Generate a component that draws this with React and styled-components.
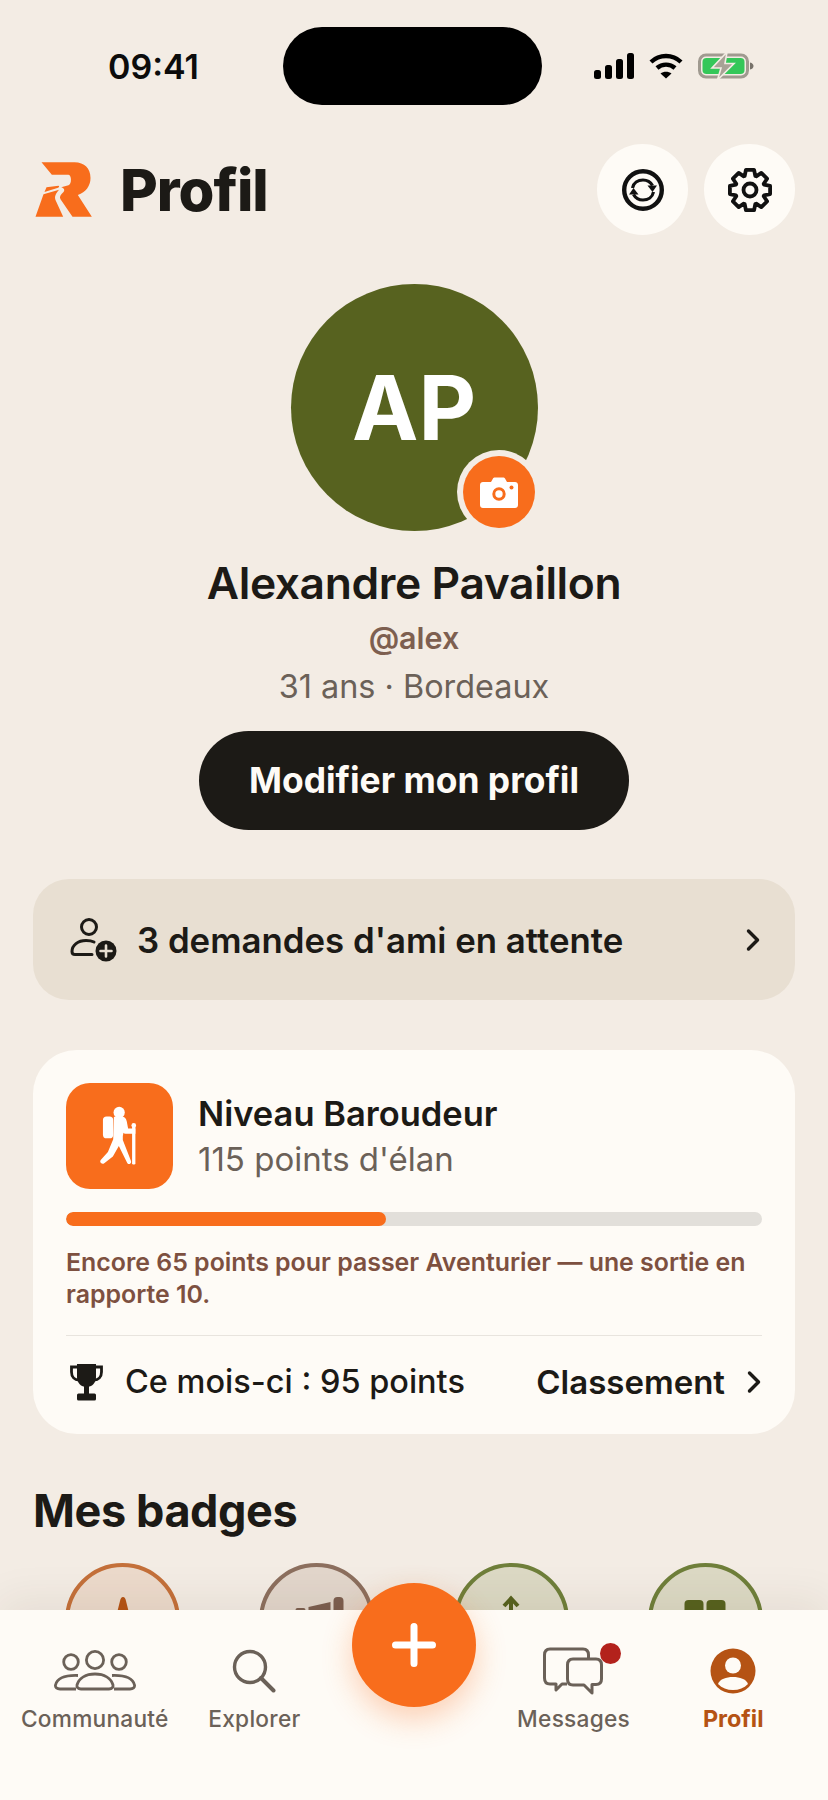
import React from "react";
import styled, { createGlobalStyle } from "styled-components";
import { ChevronRight } from "lucide-react";

const GlobalStyle = createGlobalStyle`
  html, body {
    margin: 0;
    padding: 0;
    background: #f3ece4;
  }
  * { box-sizing: border-box; }
`;

const Page = styled.div`
  position: relative;
  width: 828px;
  height: 1800px;
  overflow: hidden;
  background: #f3ece4;
  color: #1c1a16;
  font-family: Inter, "Liberation Sans", sans-serif;
`;

const StatusBar = styled.div`
  display: grid;
  grid-template-columns: 283px 259px 1fr;
  align-items: center;
  height: 78px;
  margin-top: 27px;
`;

const Time = styled.div`
  padding-left: 24px;
  text-align: center;
  font-size: 34px;
  font-weight: 600;
  color: #0c0c0c;
`;

const Island = styled.div`
  height: 78px;
  border-radius: 39px;
  background: #000;
`;

const StatusIcons = styled.div`
  display: flex;
  align-items: center;
  gap: 15px;
  padding-left: 52px;
`;

const Header = styled.header`
  display: flex;
  align-items: center;
  height: 91px;
  margin-top: 39px;
  padding: 0 33px 0 35px;
`;

const PageTitle = styled.h1`
  flex: 1;
  margin: 0 0 0 28px;
  font-size: 58px;
  font-weight: 800;
  letter-spacing: -1px;
`;

const HeaderActions = styled.div`
  display: flex;
  gap: 16px;
`;

const RoundButton = styled.div`
  display: flex;
  align-items: center;
  justify-content: center;
  width: 91px;
  height: 91px;
  border-radius: 50%;
  background: #fefbf6;
`;

const Identity = styled.section`
  display: flex;
  flex-direction: column;
  align-items: center;
  margin-top: 49px;
`;

const Avatar = styled.div`
  position: relative;
  display: flex;
  align-items: center;
  justify-content: center;
  width: 247px;
  height: 247px;
  border-radius: 50%;
  background: #57621f;
  color: #fff;
  font-size: 89px;
  font-weight: 700;
`;

const CameraBadge = styled.div`
  position: absolute;
  right: 3px;
  bottom: 3px;
  display: flex;
  align-items: center;
  justify-content: center;
  width: 72px;
  height: 72px;
  border-radius: 50%;
  background: #f86d1c;
  box-shadow: 0 0 0 6px #f3ece4;
`;

const Name = styled.h2`
  margin: 26px 0 0;
  font-size: 44.4px;
  line-height: 52px;
  font-weight: 600;
  letter-spacing: -0.4px;
`;

const Handle = styled.div`
  margin-top: 9px;
  font-size: 30.5px;
  line-height: 40px;
  font-weight: 600;
  color: #7d5f50;
`;

const Meta = styled.div`
  margin-top: 9px;
  font-size: 32.4px;
  line-height: 40px;
  color: #6b6158;
`;

const EditButton = styled.div`
  display: flex;
  align-items: center;
  justify-content: center;
  width: 430px;
  height: 99px;
  margin-top: 24px;
  border-radius: 50px;
  background: #1c1a16;
  color: #fefbf6;
  font-size: 35.4px;
  font-weight: 700;
`;

const FriendRequests = styled.div`
  display: flex;
  align-items: center;
  height: 121px;
  margin: 49px 33px 0;
  padding: 0 24px 0 37px;
  border-radius: 36px;
  background: #e8dfd2;
  font-size: 34.8px;
  font-weight: 600;
`;

const FriendLabel = styled.span`
  flex: 1;
  margin-left: 20px;
`;

const LevelCard = styled.section`
  height: 384px;
  margin: 50px 33px 0;
  padding: 33px;
  border-radius: 44px;
  background: #fefbf6;
`;

const LevelHead = styled.div`
  display: flex;
  align-items: center;
  gap: 25px;
`;

const LevelIcon = styled.div`
  display: flex;
  width: 107px;
  height: 106px;
  border-radius: 24px;
  background: #f86d1c;
`;

const LevelTitle = styled.div`
  font-size: 34.5px;
  line-height: 44px;
  font-weight: 600;
`;

const LevelPoints = styled.div`
  margin-top: 1px;
  font-size: 33px;
  line-height: 44px;
  color: #6b6158;
`;

const Progress = styled.div`
  height: 14px;
  margin-top: 23px;
  border-radius: 7px;
  background: #e2dfda;
  overflow: hidden;
`;

const ProgressFill = styled.div`
  height: 100%;
  border-radius: 7px;
  background: #f86d1c;
`;

const LevelHint = styled.p`
  margin: 20px 0 0;
  font-size: 24.9px;
  line-height: 32px;
  font-weight: 600;
  color: #7d5040;
`;

const LevelFooter = styled.div`
  display: flex;
  align-items: center;
  height: 92px;
  margin-top: 25px;
  padding-left: 4px;
  border-top: 1px solid #e8e4de;
  font-size: 33px;
`;

const MonthPoints = styled.span`
  flex: 1;
  margin-left: 22px;
  font-size: 32.5px;
  font-weight: 500;
`;

const RankLink = styled.span`
  margin-right: 11px;
  font-weight: 600;
`;

const FooterChevron = styled(ChevronRight)`
  margin-right: -10px;
`;

const SectionTitle = styled.h3`
  margin: 51px 33px 0;
  font-size: 45px;
  line-height: 52px;
  font-weight: 700;
  letter-spacing: -0.4px;
`;

const BadgeRow = styled.div`
  display: flex;
  justify-content: space-between;
  margin-top: 26px;
  padding: 0 65px;
`;

const BadgeCircle = styled.div`
  display: flex;
  justify-content: center;
  width: 115px;
  height: 115px;
  padding-top: 30px;
  border-radius: 50%;
  border: 4px solid ${(p) => p.$ring};
  background: ${(p) => p.$fill};
`;

const TabBar = styled.nav`
  position: absolute;
  left: 0;
  right: 0;
  bottom: 0;
  display: grid;
  grid-template-columns: repeat(5, 1fr);
  height: 190px;
  padding: 0 15px;
  background: #fefbf6;
  box-shadow: 0 -10px 40px rgba(60, 40, 20, 0.07);
`;

const Tab = styled.div`
  position: relative;
  display: flex;
  flex-direction: column;
  align-items: center;
  padding-top: 38px;
  font-size: ${(p) => (p.$active ? "23.4px" : "22.7px")};
  font-weight: ${(p) => (p.$active ? 700 : 450)};
  letter-spacing: ${(p) => (p.$active ? "0" : "0.25px")};
  color: ${(p) => (p.$active ? "#b55314" : "#6b6158")};
`;

const TabIcon = styled.div`
  display: flex;
  align-items: center;
  justify-content: center;
  height: 46px;
`;

const TabLabel = styled.span`
  margin-top: 10px;
  line-height: 30px;
`;

const MessageDot = styled.div`
  position: absolute;
  top: 33px;
  right: 32px;
  width: 21px;
  height: 21px;
  border-radius: 50%;
  background: #b3221c;
`;

const Fab = styled.div`
  position: absolute;
  left: 352px;
  bottom: 93px;
  display: flex;
  align-items: center;
  justify-content: center;
  width: 124px;
  height: 124px;
  border-radius: 50%;
  background: #f86d1c;
  box-shadow: 0 12px 30px rgba(248, 109, 28, 0.3);
`;

function Signal() {
  return (
    <svg width="40" height="26" viewBox="0 0 40 26" fill="#000">
      <rect x="0" y="17" width="7" height="9" rx="2.5" />
      <rect x="11" y="12" width="7" height="14" rx="2.5" />
      <rect x="22" y="6" width="7" height="20" rx="2.5" />
      <rect x="33" y="0" width="7" height="26" rx="2.5" />
    </svg>
  );
}

function Wifi() {
  return (
    <svg width="34" height="26" viewBox="0 0 34 26" fill="none" stroke="#000" strokeWidth="4.4">
      <path d="M2 9C10.5 1 23.5 1 32 9" />
      <path d="M8 15C13 10.5 21 10.5 26 15" />
      <path d="M17 25.5L11.5 20.5C14.5 18 19.5 18 22.5 20.5Z" fill="#000" stroke="none" />
    </svg>
  );
}

function Battery() {
  return (
    <svg width="56" height="28" viewBox="0 0 56 28">
      <rect x="1.5" y="3" width="48" height="22" rx="6.5" fill="none" stroke="#a09a90" strokeWidth="3" />
      <rect x="4.5" y="6" width="42" height="16" rx="4" fill="#34c759" />
      <path d="M52 10.5C54.5 11 55.5 12.5 55.5 14C55.5 15.5 54.5 17 52 17.5Z" fill="#77726a" />
      <path d="M29 0L14 16H23L19.5 28L36 11.5H27Z" fill="#a8a296" stroke="#f3ece4" strokeWidth="1.6" />
    </svg>
  );
}

function Logo() {
  return (
    <svg width="57" height="55" viewBox="0 0 170 165" fill="#f86d1c">
      <path d="M19 1H118C148 1 166 20 166 48C166 72 152 90 128 99L170 164H112L76 112C72 105 76 98 85 90C90 84 86 78 78 76L100 70C110 66 110 40 100 38H50Z" />
      <path d="M34 76L70 71C74 73 72 76 64 79L28 90ZM25 97L72 83C62 94 56 104 62 116L84 164H1Z" />
    </svg>
  );
}

function RefreshIcon() {
  return (
    <svg width="42" height="42" viewBox="0 0 42 42" fill="none" stroke="#111">
      <circle cx="21" cy="21" r="18.8" strokeWidth="4.4" />
      <path d="M10.5 19C11.5 14 16 11 21 11C25 11 28.5 13 30.5 16.5" strokeWidth="3.2" />
      <path d="M31.5 23C30.5 28 26 31 21 31C17 31 13.5 29 11.5 25.5" strokeWidth="3.2" />
      <path d="M25.5 16.5H35L30.5 23Z" fill="#111" stroke="none" />
      <path d="M16.5 25.5H7L11.5 19Z" fill="#111" stroke="none" />
    </svg>
  );
}

// 8 teeth, one pointing straight up
function gearPath(cx, cy, outer, inner) {
  const parts = [];
  for (let i = 0; i < 8; i++) {
    const mid = (i * Math.PI) / 4 - Math.PI / 2;
    const pts = [
      [inner, mid - 0.36],
      [outer, mid - 0.2],
      [outer, mid + 0.2],
      [inner, mid + 0.36],
    ];
    pts.forEach(([r, a]) => {
      const x = (cx + r * Math.cos(a)).toFixed(1);
      const y = (cy + r * Math.sin(a)).toFixed(1);
      parts.push(`${parts.length === 0 ? "M" : "L"}${x} ${y}`);
    });
  }
  return parts.join("") + "Z";
}

function GearIcon() {
  return (
    <svg width="46" height="46" viewBox="0 0 46 46" fill="none" stroke="#111" strokeWidth="3.8" strokeLinejoin="round">
      <path d={gearPath(23, 23, 20.5, 15)} />
      <circle cx="23" cy="23" r="6.5" />
    </svg>
  );
}

function CameraIcon() {
  return (
    <svg width="38" height="31" viewBox="0 0 38 31">
      <path d="M3 5H11L13 1.5C13.5 .7 14 .5 15 .5H23C24 .5 24.5 .7 25 1.5L27 5H35C36.7 5 38 6.3 38 8V28C38 29.7 36.7 31 35 31H3C1.3 31 0 29.7 0 28V8C0 6.3 1.3 5 3 5Z" fill="#fff" />
      <circle cx="19" cy="17" r="5.2" fill="none" stroke="#f86d1c" strokeWidth="3" />
      <circle cx="31.5" cy="10.5" r="2" fill="#f86d1c" />
    </svg>
  );
}

function FriendIcon() {
  return (
    <svg width="47" height="44" viewBox="0 0 47 44" fill="none" stroke="#1c1a16" strokeWidth="3" strokeLinecap="round">
      <circle cx="19" cy="9" r="7.5" />
      <path d="M24 24C21 22.5 18 22.5 16 22.5C8 22.5 2 27 2 33.5C2 35.5 3 36.5 5 36.5H22" />
      <circle cx="36" cy="33" r="10.5" fill="#1c1a16" stroke="none" />
      <path d="M36 27.5V38.5M30.5 33H41.5" stroke="#e8dfd2" strokeWidth="2.6" />
    </svg>
  );
}

function HikerIcon() {
  return (
    <svg width="107" height="106" viewBox="0 0 320 320" fill="#fff">
      <circle cx="159" cy="89" r="17" />
      <rect x="110" y="101" width="31" height="66" rx="11" />
      <path d="M143 102H168C176 102 180 108 182 116L186 137H208V153H178C175 153 173 152 172 150L170 160V172L195 236C197 244 186 248 183 241L158 190L140 222L113 243C106 247 98 238 104 232L125 208L141 170Z" />
      <rect x="198" y="124" width="10" height="122" rx="4" />
      <circle cx="203" cy="128" r="7" />
    </svg>
  );
}

function TrophyIcon() {
  return (
    <svg width="33" height="38" viewBox="0 0 33 38" fill="#1c1a16">
      <path d="M7 1H26V14C26 20 22 24 16.5 24C11 24 7 20 7 14Z" />
      <path d="M7 4H1.5V9C1.5 14 4.5 17 9 17M26 4H31.5V9C31.5 14 28.5 17 24 17" fill="none" stroke="#1c1a16" strokeWidth="2.8" />
      <rect x="14" y="23" width="5" height="8" />
      <rect x="7" y="30.5" width="19" height="7" rx="1.5" />
    </svg>
  );
}

function CommunityIcon() {
  return (
    <svg width="82" height="42" viewBox="0 0 82 42" fill="none" stroke="#6b6158" strokeWidth="2.8">
      <circle cx="17" cy="12" r="7.3" />
      <circle cx="41" cy="10" r="8.6" />
      <circle cx="65" cy="12" r="7.3" />
      <path d="M27 39H55C58 39 59.5 37 59 35C57 28 50 24 41 24C32 24 25 28 23 35C22.5 37 24 39 27 39Z" />
      <path d="M22 39H6C3 39 1 37.5 1.5 35C3 29 10 25 24 25.5" />
      <path d="M60 39H76C79 39 81 37.5 80.5 35C79 29 72 25 58 25.5" />
    </svg>
  );
}

function SearchIcon() {
  return (
    <svg width="44" height="44" viewBox="0 0 44 44" fill="none" stroke="#6b6158" strokeWidth="3.4" strokeLinecap="round">
      <circle cx="18" cy="18" r="15.5" />
      <path d="M29 29L41.5 41.5" strokeWidth="4" />
    </svg>
  );
}

function MessagesIcon() {
  return (
    <svg width="62" height="48" viewBox="0 0 62 48" fill="none" stroke="#6b6158" strokeWidth="3" strokeLinejoin="round">
      <path d="M24 37H19L13 43V37H7C3.5 37 1.5 35 1.5 31V8C1.5 4 3.5 2 7 2H40C43.5 2 45.5 4 45.5 8V12" />
      <path d="M30 12H53C56.5 12 58.5 14 58.5 18V32C58.5 35.5 56.5 37.5 53 37.5H49V46L41 38H30C26.5 38 24.5 36 24.5 32V18C24.5 14 26.5 12 30 12Z" />
    </svg>
  );
}

function ProfileIcon() {
  return (
    <svg width="46" height="46" viewBox="0 0 46 46">
      <circle cx="23" cy="23" r="22.5" fill="#b55314" />
      <circle cx="23" cy="17.5" r="8" fill="#fefbf6" />
      <path d="M8 36C10 31 16 29 23 29C30 29 36 31 38 36C34 40 29 42 23 42C17 42 12 40 8 36Z" fill="#fefbf6" />
    </svg>
  );
}

function PlusIcon() {
  return (
    <svg width="44" height="44" viewBox="0 0 44 44" stroke="#fff" strokeWidth="7" strokeLinecap="round">
      <path d="M22 3.5V40.5M3.5 22H40.5" />
    </svg>
  );
}

const badges = [
  {
    ring: "#c4703a",
    fill: "#ecdacb",
    icon: <path d="M24 0C25.5 0 26.5 1.5 27 4L31 20H17L21 4C21.5 1.5 22.5 0 24 0Z" fill="#b55314" />,
  },
  {
    ring: "#8c6f5e",
    fill: "#e2d6cb",
    icon: (
      <g fill="#7d5f50">
        <rect x="2.5" y="11" width="10" height="12" rx="2" />
        <path d="M15.5 10L37.5 5V23H15.5Z" />
        <rect x="40.5" y="0" width="10" height="23" rx="4" />
      </g>
    ),
  },
  {
    ring: "#6f7f3a",
    fill: "#dcd9c4",
    icon: <path d="M17 9L24 1.5L31 9M24 1.5V24" fill="none" stroke="#57621f" strokeWidth="4" />,
  },
  {
    ring: "#6f7f3a",
    fill: "#dcd9c4",
    icon: (
      <g fill="#57621f">
        <rect x="3.5" y="3" width="19" height="21" rx="4" />
        <rect x="25.5" y="3" width="19" height="21" rx="4" />
      </g>
    ),
  },
];

export default function App() {
  return (
    <Page>
      <GlobalStyle />
      <StatusBar>
        <Time>09:41</Time>
        <Island />
        <StatusIcons>
          <Signal />
          <Wifi />
          <Battery />
        </StatusIcons>
      </StatusBar>

      <Header>
        <Logo />
        <PageTitle>Profil</PageTitle>
        <HeaderActions>
          <RoundButton><RefreshIcon /></RoundButton>
          <RoundButton><GearIcon /></RoundButton>
        </HeaderActions>
      </Header>

      <Identity>
        <Avatar>
          AP
          <CameraBadge><CameraIcon /></CameraBadge>
        </Avatar>
        <Name>Alexandre Pavaillon</Name>
        <Handle>@alex</Handle>
        <Meta>31 ans · Bordeaux</Meta>
        <EditButton>Modifier mon profil</EditButton>
      </Identity>

      <FriendRequests>
        <FriendIcon />
        <FriendLabel>3 demandes d'ami en attente</FriendLabel>
        <ChevronRight size={36} strokeWidth={2.3} />
      </FriendRequests>

      <LevelCard>
        <LevelHead>
          <LevelIcon><HikerIcon /></LevelIcon>
          <div>
            <LevelTitle>Niveau Baroudeur</LevelTitle>
            <LevelPoints>115 points d'élan</LevelPoints>
          </div>
        </LevelHead>
        <Progress>
          <ProgressFill style={{ width: "46%" }} />
        </Progress>
        <LevelHint>Encore 65 points pour passer Aventurier — une sortie en rapporte 10.</LevelHint>
        <LevelFooter>
          <TrophyIcon />
          <MonthPoints>Ce mois-ci : 95 points</MonthPoints>
          <RankLink>Classement</RankLink>
          <FooterChevron size={36} strokeWidth={2.3} />
        </LevelFooter>
      </LevelCard>

      <SectionTitle>Mes badges</SectionTitle>
      <BadgeRow>
        {badges.map((b, i) => (
          <BadgeCircle key={i} $ring={b.ring} $fill={b.fill}>
            <svg width="48" height="24" viewBox="0 0 48 24" overflow="visible">{b.icon}</svg>
          </BadgeCircle>
        ))}
      </BadgeRow>

      <TabBar>
        <Tab>
          <TabIcon><CommunityIcon /></TabIcon>
          <TabLabel>Communauté</TabLabel>
        </Tab>
        <Tab>
          <TabIcon><SearchIcon /></TabIcon>
          <TabLabel>Explorer</TabLabel>
        </Tab>
        <div />
        <Tab>
          <TabIcon><MessagesIcon /></TabIcon>
          <MessageDot />
          <TabLabel>Messages</TabLabel>
        </Tab>
        <Tab $active>
          <TabIcon><ProfileIcon /></TabIcon>
          <TabLabel>Profil</TabLabel>
        </Tab>
      </TabBar>
      <Fab><PlusIcon /></Fab>
    </Page>
  );
}
